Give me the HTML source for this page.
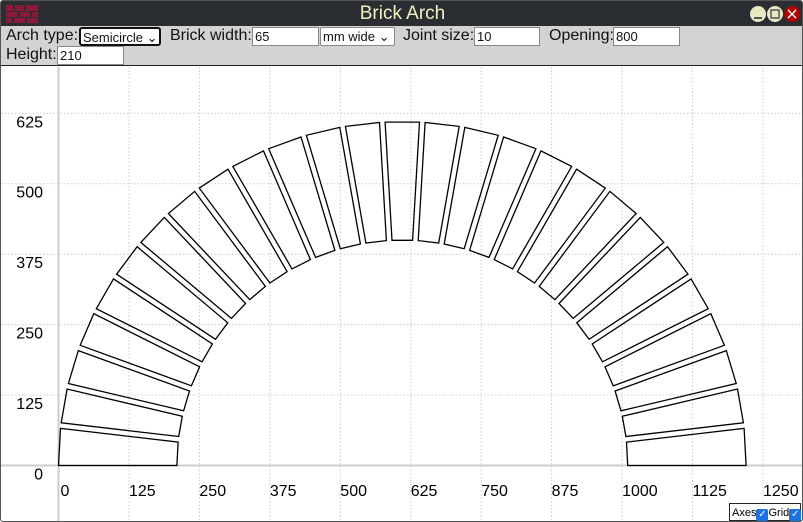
<!DOCTYPE html>
<html><head><style>
*{margin:0;padding:0;box-sizing:border-box}
body{width:803px;height:522px;overflow:hidden;background:#fff;font-family:"Liberation Sans",sans-serif}
#win{position:absolute;left:0;top:0;width:803px;height:522px;border:1px solid #555;border-radius:3px;overflow:hidden}
#title{position:absolute;left:0;top:0;width:803px;height:25px;background:#2a2d32;color:#f0f0c0;font-size:19px;text-align:center;line-height:26px}
#tb{position:absolute;left:0;top:25px;width:803px;height:39px;background:#d3d3d3;font-size:16px;color:#111}
#tb span{position:absolute;top:1px}
.in{position:absolute;height:19px;background:#fff;border:1px solid #888;font-size:13px;padding-left:2px;line-height:17px}
.sel{position:absolute;height:19px;background:#fff;border:1px solid #888;font-size:13px;padding-left:2px;line-height:17px;border-radius:2px}
#cv{position:absolute;left:0;top:64px;width:803px;height:458px;border-top:1px solid #222}
.cb{display:inline-block;width:12px;height:12px;background:#1a73e8;border-radius:2px;color:#fff;font-size:10px;line-height:12px;text-align:center;vertical-align:-1px}
</style></head><body><div id="win">
<div id="title">Brick Arch
<svg style="position:absolute;left:5px;top:4px" width="32" height="18"><g fill="#8b1a3a"><rect x="0" y="0" width="32" height="18"/></g><g fill="#2a2d32"><rect x="7" y="0" width="2" height="5"/><rect x="18" y="0" width="2" height="5"/><rect x="0" y="6" width="32" height="1"/><rect x="12" y="6" width="2" height="6"/><rect x="24" y="6" width="2" height="6"/><rect x="0" y="12" width="32" height="1"/><rect x="6" y="12" width="2" height="6"/><rect x="19" y="12" width="2" height="6"/></g></svg>
<svg style="position:absolute;left:749px;top:4px" width="52" height="18"><circle cx="8" cy="9" r="8" fill="#e8e8c0"/><rect x="4" y="12" width="8" height="2" fill="#555"/><circle cx="25" cy="9" r="8" fill="#e8e8c0"/><rect x="21" y="5" width="8" height="8" fill="none" stroke="#555" stroke-width="1.5"/><circle cx="42" cy="9" r="8" fill="#b00000"/><path d="M38 5l8 8M46 5l-8 8" stroke="#fff" stroke-width="1.5"/></svg>
</div>
<div id="tb">
<span style="left:5px">Arch type:</span>
<div class="sel" style="left:78px;top:1px;width:82px;border:2px solid #111;border-radius:3px">Semicircle ⌄</div>
<span style="left:169px">Brick width:</span>
<div class="in" style="left:251px;top:1px;width:67px">65</div>
<div class="sel" style="left:319px;top:1px;width:75px">mm wide ⌄</div>
<span style="left:402px">Joint size:</span>
<div class="in" style="left:473px;top:1px;width:66px">10</div>
<span style="left:548px">Opening:</span>
<div class="in" style="left:612px;top:1px;width:67px">800</div>
<span style="left:5px;top:20px">Height:</span>
<div class="in" style="left:56px;top:20px;width:67px">210</div>
</div>
<div id="cv"></div>
<svg id="g" style="position:absolute;left:0;top:0" width="803" height="522"></svg>
<div style="position:absolute;left:728px;top:502px;width:72px;height:18px;border:1px solid #222;background:#fff;font-size:11px;line-height:18px;padding-left:2px;white-space:nowrap">Axes<span class="cb">✓</span>Grid<span class="cb">✓</span></div>
</div>
<script>
var S=0.5636,X0=57.5,Y0=464.5;
function px(x){return X0+x*S}function py(y){return Y0-y*S}
var h='';
for(var i=1;i<=10;i++){var x=px(i*125).toFixed(1);h+='<line x1="'+x+'" y1="66" x2="'+x+'" y2="520" stroke="#ccc" stroke-dasharray="1.5,2"/>';}
for(var i=1;i<=5;i++){var y=py(i*125).toFixed(1);h+='<line x1="0" y1="'+y+'" x2="803" y2="'+y+'" stroke="#ccc" stroke-dasharray="1.5,2"/>';}
h+='<line x1="0" y1="'+Y0+'" x2="803" y2="'+Y0+'" stroke="#ccc" stroke-width="2"/>';
h+='<line x1="'+X0+'" y1="66" x2="'+X0+'" y2="520" stroke="#ccc" stroke-width="2"/>';
var xl=[0,125,250,375,500,625,750,875,1000,1125,1250];
xl.forEach(function(v){h+='<text x="'+(px(v)+(v?0:2))+'" y="495" font-size="16" text-anchor="start" font-family="Liberation Sans">'+v+'</text>';});
[0,125,250,375,500,625].forEach(function(v){h+='<text x="42" y="'+(py(v)+14)+'" font-size="16" text-anchor="end" font-family="Liberation Sans">'+v+'</text>';});
var N=27,cx=610,Ri=400,Ro=610,P=Math.PI/N;
for(var i=0;i<N;i++){
 function pt(r,end){var a=end?(i+1)*P-(i<N-1?Math.asin(5/r):0):i*P+(i>0?Math.asin(5/r):0);a=Math.PI-a;return px(cx+r*Math.cos(a)).toFixed(1)+','+py(r*Math.sin(a)).toFixed(1);}
 h+='<polygon points="'+pt(Ri,0)+' '+pt(Ro,0)+' '+pt(Ro,1)+' '+pt(Ri,1)+'" fill="none" stroke="#000" stroke-width="1.3"/>';
}
document.getElementById('g').innerHTML=h;
</script>
</body></html>
